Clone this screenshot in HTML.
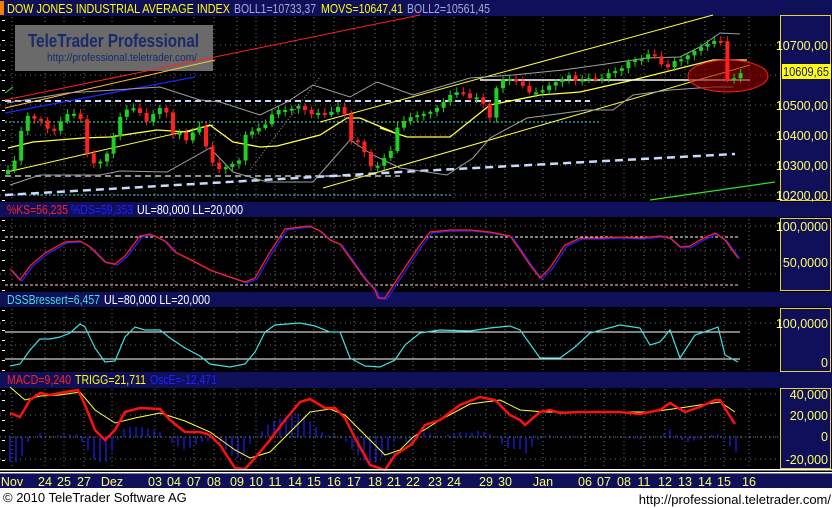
<!DOCTYPE html>
<html><head><meta charset="utf-8"><style>
html,body{margin:0;padding:0;background:#000;width:832px;height:508px;overflow:hidden}
svg{display:block;font-family:"Liberation Sans",sans-serif}
</style></head><body>
<svg id="s" width="832" height="508" xmlns="http://www.w3.org/2000/svg">
<rect width="832" height="508" fill="#000"/>
<g id="grid"></g>
<rect x="0" y="0" width="832" height="16" fill="#10105a"/>
<rect x="0" y="1" width="4" height="14" fill="#f08000"/>
<text x="7" y="13" font-size="12.5" fill="#ffff00" textLength="223" lengthAdjust="spacingAndGlyphs">DOW JONES INDUSTRIAL AVERAGE INDEX</text>
<text x="234" y="13" font-size="12.5" fill="#a8a8d8" textLength="82" lengthAdjust="spacingAndGlyphs">BOLL1=10733,37</text>
<text x="321" y="13" font-size="12.5" fill="#ffff00" textLength="82" lengthAdjust="spacingAndGlyphs">MOVS=10647,41</text>
<text x="407" y="13" font-size="12.5" fill="#a8a8d8" textLength="83" lengthAdjust="spacingAndGlyphs">BOLL2=10561,45</text>

<rect x="0" y="202" width="832" height="15" fill="#10105a"/>
<text x="7" y="214" font-size="12.5" fill="#ff2020" textLength="61" lengthAdjust="spacingAndGlyphs">%KS=56,235</text>
<text x="71" y="214" font-size="12.5" fill="#2020ff" textLength="62" lengthAdjust="spacingAndGlyphs">%DS=59,353</text>
<text x="137" y="214" font-size="12.5" fill="#fff" textLength="106" lengthAdjust="spacingAndGlyphs">UL=80,000 LL=20,000</text>

<rect x="0" y="292" width="832" height="15" fill="#10105a"/>
<text x="7" y="304" font-size="12.5" fill="#40e0e0" textLength="93" lengthAdjust="spacingAndGlyphs">DSSBressert=6,457</text>
<text x="104" y="304" font-size="12.5" fill="#fff" textLength="106" lengthAdjust="spacingAndGlyphs">UL=80,000 LL=20,000</text>

<rect x="0" y="372" width="832" height="16" fill="#10105a"/>
<text x="7" y="384" font-size="12.5" fill="#ff2020" textLength="64" lengthAdjust="spacingAndGlyphs">MACD=9,240</text>
<text x="75" y="384" font-size="12.5" fill="#ffff00" textLength="71" lengthAdjust="spacingAndGlyphs">TRIGG=21,711</text>
<text x="150" y="384" font-size="12.5" fill="#2020ff" textLength="67" lengthAdjust="spacingAndGlyphs">OscE=-12,471</text>

<rect x="15" y="25" width="198" height="46" fill="#6a6a6a"/>
<text x="28" y="47" font-size="18" font-weight="bold" fill="#1a2a6a" textLength="171" lengthAdjust="spacingAndGlyphs">TeleTrader Professional</text>
<text x="47" y="61" font-size="11" fill="#1a2a6a" textLength="150" lengthAdjust="spacingAndGlyphs">http://professional.teletrader.com/</text>

<g id="main"></g>

<g fill="#10105a" stroke="#e8d040" stroke-width="1">
<rect x="780.5" y="15.5" width="50" height="185"/>
<rect x="780.5" y="218.5" width="50" height="72"/>
<rect x="780.5" y="308.5" width="50" height="63"/>
<rect x="780.5" y="388.5" width="50" height="80"/>
</g>
<g font-size="12.5" fill="#ffff60" text-anchor="end">
<text x="828" y="50">10700,00</text>
<text x="828" y="110">10500,00</text>
<text x="828" y="140">10400,00</text>
<text x="828" y="170">10300,00</text>
<text x="828" y="200">10200,00</text>
<text x="828" y="231">100,0000</text>
<text x="828" y="267">50,0000</text>
<text x="828" y="328">100,0000</text>
<text x="828" y="367">0</text>
<text x="828" y="399">40,000</text>
<text x="828" y="420">20,000</text>
<text x="828" y="441">0</text>
<text x="828" y="464">-20,000</text>
</g>
<rect x="782" y="64" width="49" height="15" fill="#ffff00"/>
<text x="783" y="76" font-size="12.5" fill="#1010a0" textLength="46" lengthAdjust="spacingAndGlyphs">10609,65</text>

<rect x="0" y="469" width="832" height="1.5" fill="#fff"/>
<rect x="0" y="472" width="832" height="1.5" fill="#fff"/>
<rect x="0" y="474" width="832" height="14" fill="#10105a"/>
<g id="xl" font-size="12.5" fill="#ffff60"></g>
<rect x="0" y="488" width="832" height="20" fill="#fff"/>
<text x="3" y="502" font-size="13" fill="#000">© 2010 TeleTrader Software AG</text>
<text x="831" y="504" font-size="13" fill="#000" text-anchor="end">http://professional.teletrader.com/</text>
</svg>
<script>
(function(){
var NS="http://www.w3.org/2000/svg";
function el(p,t,a){var e=document.createElementNS(NS,t);for(var k in a)e.setAttribute(k,a[k]);document.getElementById(p).appendChild(e);return e;}
function pl(p,pts,c,w,d){var a={points:pts.map(function(q){return q.join(",")}).join(" "),fill:"none",stroke:c,"stroke-width":w||1};if(d)a["stroke-dasharray"]=d;return el(p,"polyline",a);}
function interp(pts,x){for(var i=1;i<pts.length;i++){if(x<=pts[i][0]){var a=pts[i-1],b=pts[i];return a[1]+(b[1]-a[1])*(x-a[0])/(b[0]-a[0]);}}return pts[pts.length-1][1];}
var xs=[[12,"Nov"],[45,"24"],[64,"25"],[84,"27"],[112,"Dez"],[155,"03"],[174,"04"],[194,"07"],[214,"08"],[237,"09"],[256,"10"],[275,"11"],[295,"14"],[314,"15"],[334,"16"],[354,"17"],[375,"18"],[394,"21"],[413,"22"],[435,"23"],[454,"24"],[486,"29"],[505,"30"],[543,"Jan"],[585,"06"],[604,"07"],[624,"08"],[644,"11"],[665,"12"],[685,"13"],[705,"14"],[724,"15"],[749,"16"]];
xs.forEach(function(q){var t=el("xl","text",{x:q[0],y:486,"text-anchor":"middle"});t.textContent=q[1];
 [[17,200],[219,290],[309,371],[389,468]].forEach(function(r){el("grid","line",{x1:q[0],x2:q[0],y1:r[0],y2:r[1],stroke:"#707070","stroke-dasharray":"1 3"});});});
[45,75,105,135,165,195,226,250,274,323,345,394,415,437,459].forEach(function(y){el("grid","line",{x1:0,x2:778,y1:y,y2:y,stroke:"#707070","stroke-dasharray":"1 4"});});
for(var y=20;y<468;y+=10){if((y>200&&y<219)||(y>290&&y<309)||(y>371&&y<389))continue;el("grid","rect",{x:2,y:y,width:3,height:1,fill:"#fff"});}
var M="main";
pl(M,[[5,101],[590,101]],"#c8d8ff",2,"6 4");
pl(M,[[5,122],[600,122]],"#40e0e0",1,"2 2");
pl(M,[[5,195],[453,195]],"#40e0e0",1,"2 2");
pl(M,[[5,176],[400,176]],"#909090",2,"6 4");
pl(M,[[5,195],[400,172],[735,154]],"#c8d8ff",2.5,"8 5");
pl(M,[[5,100],[420,15]],"#ff2020",1);
pl(M,[[5,108],[215,60]],"#ffc040",1);
pl(M,[[5,113],[195,77]],"#2020ff",1.3);
pl(M,[[5,93],[13,87]],"#30e030",1);
pl(M,[[7,172],[213,125]],"#ffff40",1);
pl(M,[[323,188],[750,65]],"#ffff40",1);
pl(M,[[320,122],[713,15]],"#ffff40",1);
pl(M,[[8,148],[33,142],[83,138],[110,137],[157,130],[187,132],[210,125],[233,142],[260,147],[277,146],[320,135],[347,118],[360,118],[393,132],[380,128],[407,137],[450,137],[490,105],[540,95],[567,93],[580,92],[633,80],[713,60],[747,60]],"#ffff40",1.3);
pl(M,[[7,103],[67,93],[160,87],[200,100],[220,102],[260,115],[287,102],[313,85],[350,97],[377,82],[413,95],[470,78],[513,75],[563,70],[613,63],[647,58],[680,57],[700,47],[720,33],[740,34]],"#a0a0a0",1);
pl(M,[[10,185],[40,175],[100,175],[120,171],[167,172],[210,148],[233,172],[267,182],[313,182],[350,140],[373,155],[400,168],[447,175],[473,158],[490,138],[527,118],[587,110],[613,110],[633,95],[670,90],[713,87],[733,87]],"#a0a0a0",1);
pl(M,[[250,170],[320,77]],"#a0a0a0",1,"1 2");
pl(M,[[480,80],[750,80]],"#ffffff",1.5);
pl(M,[[650,200],[775,182]],"#30e030",1.2);
el(M,"ellipse",{cx:728,cy:76,rx:40,ry:16,fill:"rgba(150,0,0,0.6)",stroke:"#ff2020","stroke-width":1});
var price=[[6,172],[8,170],[15,160],[25,113],[30,118],[40,120],[45,122],[50,135],[55,130],[65,115],[70,113],[80,115],[85,150],[95,165],[100,162],[110,150],[118,120],[125,110],[135,108],[140,113],[145,120],[150,125],[155,108],[165,108],[175,140],[178,130],[185,142],[190,135],[200,126],[210,160],[220,170],[230,165],[240,160],[245,135],[255,130],[265,125],[275,110],[285,110],[295,108],[300,105],[310,115],[315,112],[325,115],[335,110],[340,105],[345,115],[350,140],[360,142],[370,165],[375,172],[380,160],[390,155],[395,130],[405,120],[415,115],[420,115],[430,112],[440,106],[450,95],[460,91],[470,98],[480,97],[490,118],[495,90],[505,77],[510,79],[520,83],[530,93],[540,92],[550,85],[560,80],[570,75],[575,81],[590,78],[600,80],[610,72],[620,70],[630,60],[640,60],[650,53],[660,60],[665,75],[670,62],[680,60],[690,54],[700,47],[710,43],[716,40],[724,42],[727,80],[735,78],[742,72]];
var prev=interp(price,4);
for(var x=8;x<=742;x+=6.6){var c=interp(price,x);var o=prev;var up=c<o;var tp=Math.min(o,c),h=Math.max(2,Math.abs(c-o));
 el(M,"line",{x1:x,x2:x,y1:tp-2-Math.abs(Math.sin(x))*3,y2:tp+h+2+Math.abs(Math.cos(x))*3,stroke:up?"#20d020":"#ff2020"});
 el(M,"rect",{x:x-2,y:tp,width:4,height:h,fill:up?"#20d020":"#ff2020"});prev=c;}
var K=[[10,269],[20,280],[30,266],[45,253],[65,242],[80,241],[90,247],[105,262],[115,264],[125,256],[140,236],[150,234],[165,241],[175,252],[195,262],[210,270],[230,277],[245,282],[255,278],[270,252],[285,229],[300,227],[310,226],[320,231],[330,240],[340,244],[355,265],[365,279],[375,290],[378,298],[385,298],[400,275],[420,245],[430,232],[450,230],[470,230],[490,232],[510,236],[520,250],[530,265],[540,278],[550,268],[565,245],[580,238],[600,238],[620,237],[640,238],[660,236],[670,238],[680,247],[690,246],[700,240],[715,233],[725,240],[738,258]];
el("grid","line",{x1:5,x2:740,y1:237,y2:237,stroke:"#fff","stroke-dasharray":"3 2"});
el("grid","line",{x1:5,x2:740,y1:285,y2:285,stroke:"#ffd0d0","stroke-dasharray":"3 2"});
pl(M,K.map(function(p){return [p[0]+2,p[1]+1]}),"#2020ff",1.3);
pl(M,K,"#ff2020",1.3);
el("grid","line",{x1:5,x2:740,y1:332,y2:332,stroke:"#fff"});
el("grid","line",{x1:5,x2:740,y1:359,y2:359,stroke:"#fff"});
pl(M,[[10,366],[20,364],[30,350],[40,339],[50,339],[60,337],[70,333],[80,324],[85,327],[95,348],[105,362],[115,361],[125,337],[135,327],[145,330],[160,330],[170,338],[185,348],[200,356],[210,364],[230,367],[245,364],[255,352],[265,332],[275,325],[300,323],[315,326],[330,332],[340,332],[350,358],[365,366],[380,367],[395,360],[405,345],[420,333],[440,330],[470,331],[490,328],[510,326],[520,330],[540,358],[560,358],[575,347],[590,333],[620,325],[640,328],[650,345],[660,342],[670,330],[680,358],[695,335],[710,330],[718,327],[725,355],[738,362]],"#40e0e0",1.2);
var R=[[10,413],[20,417],[30,400],[40,393],[50,395],[65,392],[78,390],[85,405],[95,430],[105,440],[115,430],[125,412],[140,408],[160,409],[170,420],[185,432],[200,432],[210,435],[220,445],[235,468],[245,469],[255,458],[270,440],[285,420],[300,402],[310,399],[325,408],[335,408],[345,418],[355,438],[370,465],[385,470],[395,455],[412,444],[425,425],[440,420],[460,405],[480,397],[495,400],[510,415],[520,420],[525,425],[540,412],[550,410],[560,413],[580,412],[600,412],[620,412],[640,414],[660,410],[670,403],[685,412],[700,407],[715,400],[720,400],[726,410],[735,424]];
var Y=[[10,387],[25,400],[40,396],[60,395],[80,392],[95,410],[115,423],[135,418],[160,413],[185,421],[210,432],[235,450],[250,458],[270,452],[290,432],[310,412],[330,409],[345,415],[360,430],[385,455],[400,450],[413,437],[440,420],[470,404],[500,400],[520,410],[545,412],[600,412],[650,412],[680,408],[720,402],[735,412]];
for(var x=10;x<=736;x+=6){var d=(interp(R,x)-interp(Y,x))*1.2;d=Math.max(-25,Math.min(25,d));el(M,"line",{x1:x,x2:x,y1:437,y2:437+d,stroke:"#2020ff","stroke-width":1.2});}
el("grid","line",{x1:5,x2:778,y1:437,y2:437,stroke:"#909090","stroke-dasharray":"1 3"});
pl(M,Y,"#ffff40",1);
pl(M,R,"#ff1010",2.5);
})();
</script>
</body></html>
